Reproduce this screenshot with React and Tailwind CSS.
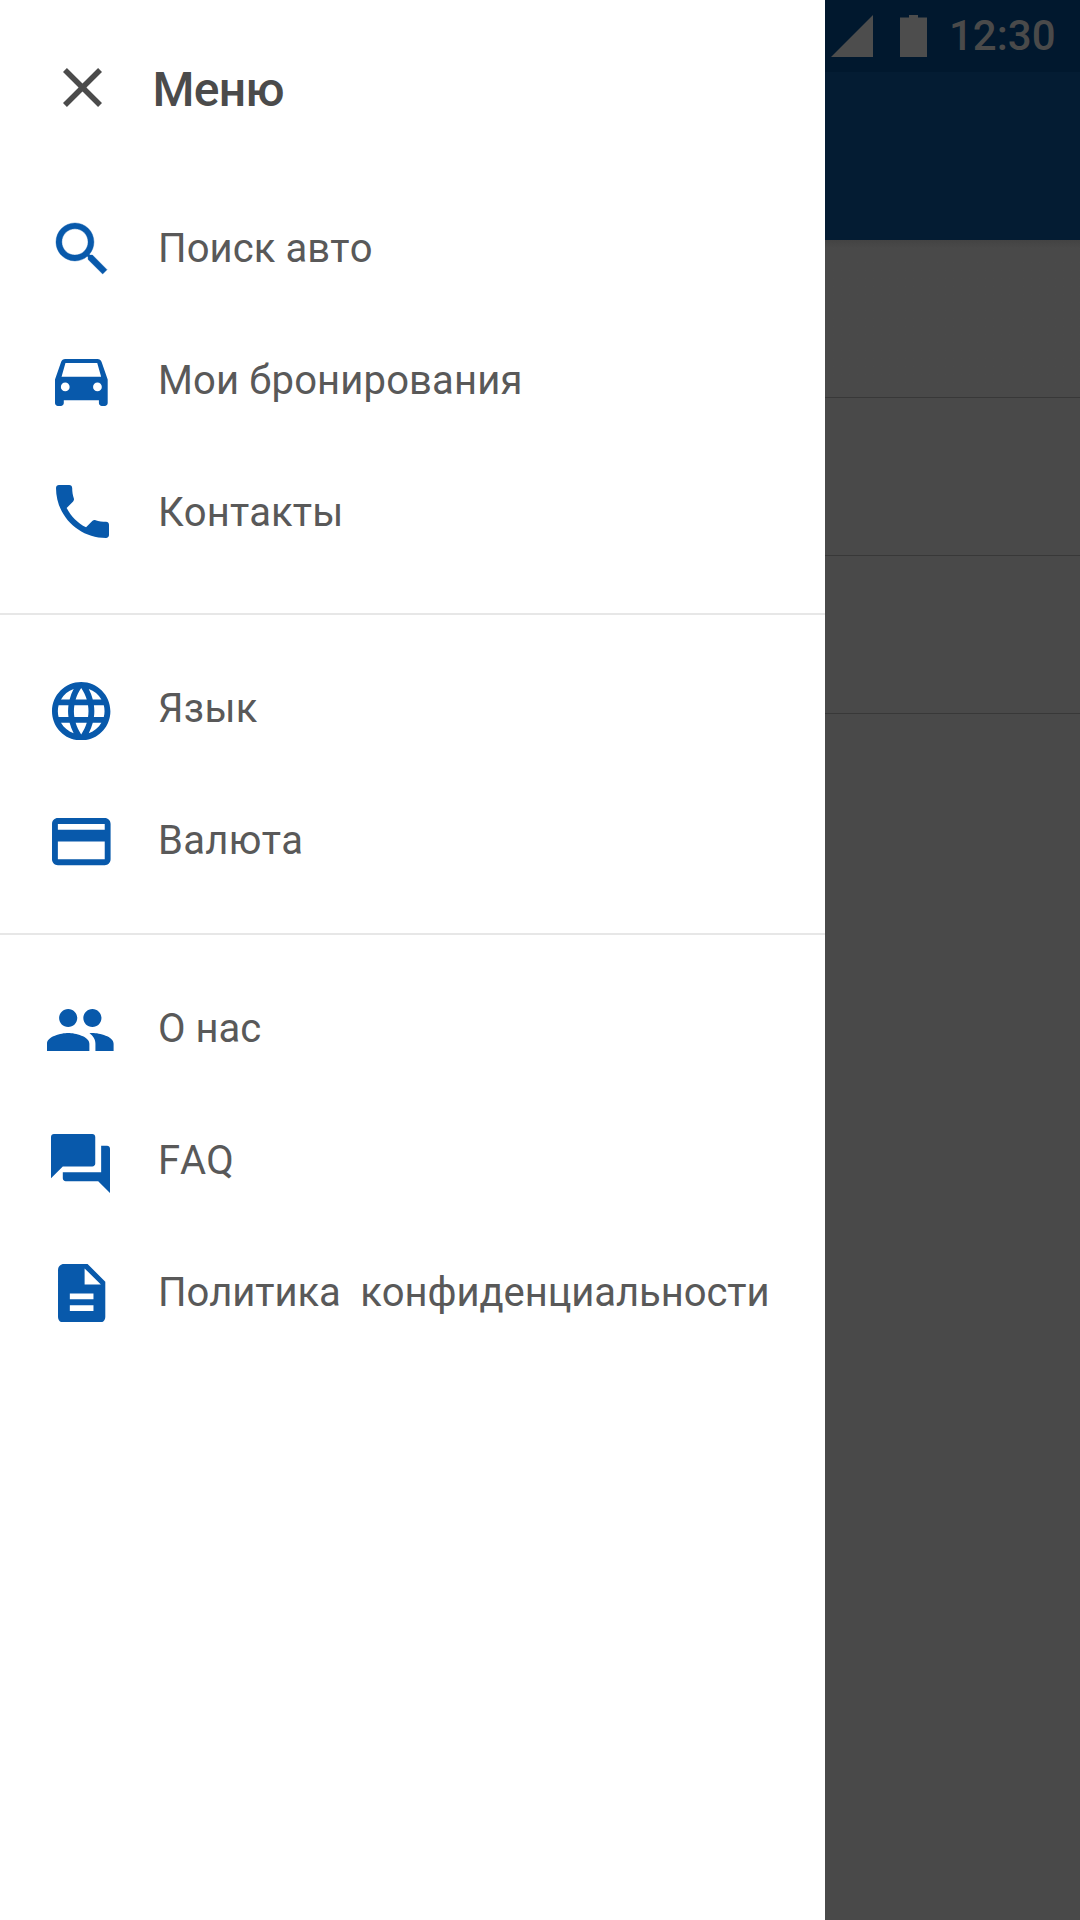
const SECTIONS = [
  {
    className: "pb-[35px]",
    items: [
      {
        label: "Поиск авто",
        text: "tracking-[0.1px]",
        viewBox: "3 3 17.49 17.49",
        icon: "ml-[55.9px] mt-[40.7px] w-[51px] h-[51px] overflow-visible stroke-[#0859ab] stroke-[0.14]",
        d: "M15.5 14h-.79l-.28-.27C15.41 12.59 16 11.11 16 9.5 16 5.91 13.09 3 9.5 3S3 5.91 3 9.5 5.91 16 9.5 16c1.61 0 3.09-.59 4.23-1.57l.27.28v.79l5 4.99L20.49 19l-4.99-5zm-6 0C7.01 14 5 11.99 5 9.5S7.01 5 9.5 5 14 7.01 14 9.5 11.99 14 9.5 14z",
      },
      {
        label: "Мои бронирования",
        text: "tracking-[0.14px]",
        viewBox: "3 4 18 16",
        icon: "ml-[55px] mt-[45px] w-[52.7px] h-[47px]",
        d: "M18.92 5.01C18.72 4.42 18.16 4 17.5 4h-11c-.66 0-1.21.42-1.42 1.01L3 11v8c0 .55.45 1 1 1h1c.55 0 1-.45 1-1v-1h12v1c0 .55.45 1 1 1h1c.55 0 1-.45 1-1v-8l-2.08-5.99zM6.5 15c-.83 0-1.5-.67-1.5-1.5S5.67 12 6.5 12s1.5.67 1.5 1.5S7.33 15 6.5 15zm11 0c-.83 0-1.5-.67-1.5-1.5s.67-1.5 1.5-1.5 1.5.67 1.5 1.5-.67 1.5-1.5 1.5zM5.24 10l1.33-4.6h10.86L18.76 10H5.24z",
      },
      {
        label: "Контакты",
        text: "tracking-[0.1px]",
        viewBox: "3 3 18 18",
        icon: "ml-[56px] mt-[39px] w-[53px] h-[53px]",
        d: "M6.62 10.79c1.44 2.83 3.76 5.14 6.59 6.59l2.2-2.2c.27-.27.67-.36 1.02-.24 1.12.37 2.33.57 3.57.57.55 0 1 .45 1 1V20c0 .55-.45 1-1 1-9.39 0-17-7.61-17-17 0-.55.45-1 1-1h3.5c.55 0 1 .45 1 1 0 1.25.2 2.45.57 3.57.11.35.03.74-.25 1.02l-2.2 2.2z",
      },
    ],
  },
  {
    className: "border-t-2 border-[#e7e7e7] py-[27px]",
    items: [
      {
        label: "Язык",
        text: "tracking-[0.3px]",
        viewBox: "2 2 20 20",
        icon: "ml-[52.3px] mt-[39.6px] w-[58.4px] h-[58.4px]",
        d: "M11.99 2C6.47 2 2 6.48 2 12s4.47 10 9.99 10C17.52 22 22 17.52 22 12S17.52 2 11.99 2zm6.93 6h-2.95c-.32-1.25-.78-2.45-1.38-3.56 1.84.63 3.37 1.91 4.33 3.56zM12 4.04c.83 1.2 1.48 2.53 1.91 3.96h-3.82c.43-1.43 1.08-2.76 1.91-3.96zM4.26 14C4.1 13.36 4 12.69 4 12s.1-1.36.26-2h3.38c-.08.66-.14 1.32-.14 2 0 .68.06 1.34.14 2H4.26zm.82 2h2.95c.32 1.25.78 2.45 1.38 3.56-1.84-.63-3.37-1.9-4.33-3.56zm2.95-8H5.08c.96-1.66 2.49-2.93 4.33-3.56C8.81 5.55 8.35 6.75 8.03 8zM12 19.96c-.83-1.2-1.48-2.53-1.91-3.96h3.82c-.43 1.43-1.08 2.76-1.91 3.96zM14.34 14H9.66c-.09-.66-.16-1.32-.16-2 0-.68.07-1.35.16-2h4.68c.09.65.16 1.32.16 2 0 .68-.07 1.34-.16 2zm.25 5.56c.6-1.11 1.06-2.31 1.38-3.56h2.95c-.96 1.65-2.49 2.93-4.33 3.56zM16.36 14c.08-.66.14-1.32.14-2 0-.68-.06-1.34-.14-2h3.38c.16.64.26 1.31.26 2s-.1 1.36-.26 2h-3.38z",
      },
      {
        label: "Валюта",
        text: "tracking-[0.3px]",
        viewBox: "2 4 20 16",
        icon: "ml-[52.1px] mt-[44.4px] w-[58.6px] h-[47.2px]",
        d: "M20 4H4c-1.11 0-1.99.89-1.99 2L2 18c0 1.11.89 2 2 2h16c1.11 0 2-.89 2-2V6c0-1.11-.89-2-2-2zm0 14H4v-6h16v6zm0-10H4V6h16v2z",
      },
    ],
  },
  {
    className: "border-t-2 border-[#e7e7e7] pt-[27px]",
    items: [
      {
        label: "О нас",
        text: "",
        viewBox: "1 5 22 14",
        icon: "ml-[47.2px] mt-[47px] w-[66.6px] h-[42.2px]",
        d: "M16 11c1.66 0 2.99-1.34 2.99-3S17.66 5 16 5c-1.66 0-3 1.34-3 3s1.34 3 3 3zm-8 0c1.66 0 2.99-1.34 2.99-3S9.66 5 8 5C6.34 5 5 6.34 5 8s1.34 3 3 3zm0 2c-2.33 0-7 1.17-7 3.5V19h14v-2.5c0-2.33-4.67-3.5-7-3.5zm8 0c-.29 0-.62.02-.97.05 1.16.84 1.97 1.97 1.97 3.45V19h6v-2.5c0-2.33-4.67-3.5-7-3.5z",
      },
      {
        label: "FAQ",
        text: "",
        viewBox: "2 2 20 20",
        icon: "ml-[51px] mt-[40.4px] w-[59px] h-[59px]",
        d: "M21 6h-2v9H6v2c0 .55.45 1 1 1h11l4 4V7c0-.55-.45-1-1-1zm-4 6V3c0-.55-.45-1-1-1H3c-.55 0-1 .45-1 1v14l4-4h10c.55 0 1-.45 1-1z",
      },
      {
        label: "Политика\u00a0 конфиденциальности",
        text: "tracking-[-0.08px]",
        viewBox: "4 2 16 20",
        icon: "ml-[58.3px] mt-[37.6px] w-[47.3px] h-[58.8px]",
        d: "M14 2H6c-1.1 0-1.99.9-1.99 2L4 20c0 1.1.89 2 1.99 2H18c1.1 0 2-.9 2-2V8l-6-6zm2 16H8v-2h8v2zm0-4H8v-2h8v2zm-3-5V3.5L18.5 9H13z",
      },
    ],
  },
];

function MenuItem({ item }) {
  return (
    <li className="flex h-[132px]">
      <span className="w-[158px] shrink-0">
        <svg viewBox={item.viewBox} preserveAspectRatio="none" className={`block fill-[#0859ab] ${item.icon}`}>
          <path d={item.d} />
        </svg>
      </span>
      <span className={`text-[40px] leading-[133px] whitespace-nowrap text-[#595959] [font-kerning:none] ${item.text}`}>
        {item.label}
      </span>
    </li>
  );
}

function Drawer() {
  return (
    <nav className="w-[825px] shrink-0 bg-white">
      <header className="flex h-[182px]">
        <button className="block w-[152.5px] shrink-0">
          <svg viewBox="5 5 14 14" className="-mt-[8px] ml-[62.5px] h-[39px] w-[39px] fill-[#4b4b4b]">
            <path d="M19 6.41L17.59 5 12 10.59 6.41 5 5 6.41 10.59 12 5 17.59 6.41 19 12 13.41 17.59 19 19 17.59 13.41 12z" />
          </svg>
        </button>
        <h1 className="text-[48px] leading-[179px] font-medium tracking-[-0.7px] text-[#4b4b4b]">Меню</h1>
      </header>
      {SECTIONS.map((section, i) => (
        <ul key={i} className={section.className}>
          {section.items.map((item) => (
            <MenuItem key={item.label} item={item} />
          ))}
        </ul>
      ))}
    </nav>
  );
}

function DimmedPage() {
  return (
    <main className="flex-1 bg-[#494949]">
      <div className="flex h-[72px] bg-[#01182e] pt-[15px] pl-[6px]">
        <svg viewBox="0 0 42 42" className="h-[42px] w-[42px] shrink-0 fill-[#4d4d4d]">
          <path d="M0 42H42V0z" />
        </svg>
        <svg viewBox="0 0 27 42" className="ml-[27px] h-[42px] w-[27px] shrink-0 fill-[#4d4d4d]">
          <path d="M0 2.5H9V0H18V2.5H27V42H0z" />
        </svg>
        <span className="ml-[22px] text-[42px] leading-[41px] font-medium text-[#4a4a4a]">12:30</span>
      </div>
      <div className="h-[168px] bg-[#041c33]" />
      <div className="h-[158px] border-b border-[#383838] bg-linear-to-b from-[#434343] to-[#494949] to-[8px]" />
      <div className="h-[158px] border-b border-[#383838]" />
      <div className="h-[158px] border-b border-[#383838]" />
    </main>
  );
}

export default function App() {
  return (
    <div className="flex h-[1920px] w-[1080px] overflow-hidden font-['Roboto',sans-serif]">
      <Drawer />
      <DimmedPage />
    </div>
  );
}
